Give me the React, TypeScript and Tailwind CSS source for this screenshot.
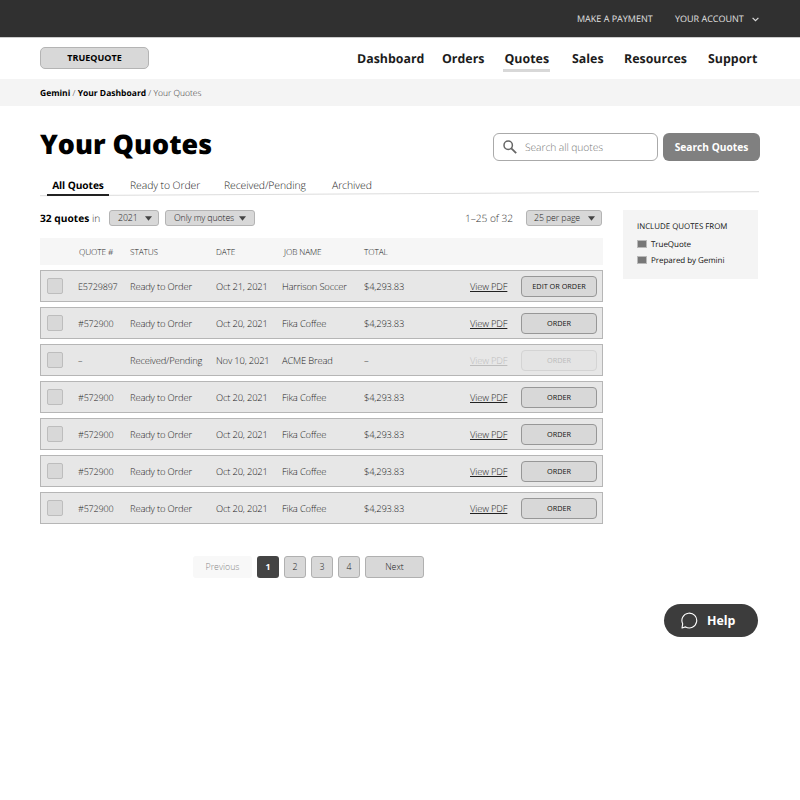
import React from "react";

type Quote = { id: string; status: string; date: string; job: string; total: string; action: string; disabled?: boolean };

const fika: Quote = { id: "#572900", status: "Ready to Order", date: "Oct 20, 2021", job: "Fika Coffee", total: "$4,293.83", action: "ORDER" };

const quotes: Quote[] = [
  { id: "E5729897", status: "Ready to Order", date: "Oct 21, 2021", job: "Harrison Soccer", total: "$4,293.83", action: "EDIT OR ORDER" },
  fika,
  { id: "–", status: "Received/Pending", date: "Nov 10, 2021", job: "ACME Bread", total: "–", action: "ORDER", disabled: true },
  fika,
  fika,
  fika,
  fika,
];

function Caret() {
  return (
    <svg className="h-[5px] w-[7px] shrink-0" viewBox="0 0 7 5">
      <path d="M0 0.3H7L3.5 4.8Z" fill="#444" />
    </svg>
  );
}

function Select({ label, className }: { label: string; className: string }) {
  return (
    <button className={`flex h-4 items-center justify-between rounded-[3px] border border-[#b4b4b4] bg-[#d8d8d8] text-[8.8px] font-light tracking-[-0.12px] text-[#222] ${className}`}>
      <span className="whitespace-nowrap pt-px">{label}</span>
      <Caret />
    </button>
  );
}

function Row({ quote }: { quote: Quote }) {
  return (
    <div className="grid h-8 grid-cols-[37px_52px_86px_66px_82px_106px_51px_76px] items-center border border-[#b6b6b6] bg-[#e7e7e7] text-[9.4px] font-light tracking-[-0.17px] text-[#222]">
      <span className="ml-[6px] size-[16px] rounded-[2px] border border-[#bdbdbd] bg-[#d8d8d8]" />
      <span className="pt-[2px] text-[9px]">{quote.id}</span>
      <span className="whitespace-nowrap pt-[3px]">{quote.status}</span>
      <span className="whitespace-nowrap pt-[2px]">{quote.date}</span>
      <span className="whitespace-nowrap pt-[2px]">{quote.job}</span>
      <span className="pt-[2px]">{quote.total}</span>
      <a className={`whitespace-nowrap pt-[2px] underline underline-offset-1 ${quote.disabled ? "text-[#bdbdbd]" : ""}`}>View PDF</a>
      <button
        className={`h-[21px] rounded-[4px] border pt-px text-[7.3px] font-normal tracking-normal ${
          quote.disabled ? "border-[#d4d4d4] bg-[#e4e4e4] text-[#bbb]" : "border-[#979797] bg-[#d8d8d8] text-[#111]"
        }`}
      >
        {quote.action}
      </button>
    </div>
  );
}

function Page({ label }: { label: string }) {
  return <button className="h-[22px] w-[22px] rounded-[3px] border border-[#b0b0b0] bg-[#d8d8d8] pt-px">{label}</button>;
}

export default function App() {
  return (
    <div className="relative h-[800px] w-[800px] overflow-hidden bg-white font-['Open_Sans',sans-serif] text-black [text-rendering:geometricPrecision]">
      <header className="flex h-[37px] items-center bg-[#303030] pl-[577px] text-[9px] text-[#e2e2e2]">
        <span className="w-[98px] whitespace-nowrap">MAKE A PAYMENT</span>
        <span className="w-[77px] whitespace-nowrap">YOUR ACCOUNT</span>
        <svg className="mt-[2px] h-[5px] w-[7px]" viewBox="0 0 7 5" fill="none" stroke="#ddd" strokeWidth="1.2">
          <path d="M0.6 0.9L3.5 3.7L6.4 0.9" />
        </svg>
      </header>

      <nav className="flex h-[42px] items-center border-t border-[#ccc] pl-10 text-[12.4px] font-bold text-[#1c1c1c]">
        <button className="-mt-px h-[22px] w-[109px] rounded-[5px] border border-[#b4b4b4] bg-[#d8d8d8] text-[9px] font-bold text-black">TRUEQUOTE</button>
        <div className="flex pl-[208px] pt-[2px]">
          <a className="w-[85px]">Dashboard</a>
          <a className="w-[61px]">Orders</a>
          <a className="-mb-[3px] mr-[22px] w-[47px] whitespace-nowrap border-b-[3px] border-[#d8d8d8] pl-[1.5px]">Quotes</a>
          <a className="w-[52px]">Sales</a>
          <a className="w-[84px]">Resources</a>
          <a>Support</a>
        </div>
      </nav>

      <div className="flex h-[27px] items-center whitespace-pre bg-[#f4f4f4] pl-10 pt-[3px] text-[8.5px] font-light text-[#333]">
        <b className="font-bold text-black">Gemini</b> / <b className="font-bold text-black">Your Dashboard</b> / Your Quotes
      </div>

      <main className="pl-10">
        <div className="flex h-[70px] pt-[27px]">
          <h1 className="-mt-[8px] w-[453px] text-[26.9px] font-extrabold leading-[37px]">Your Quotes</h1>
          <div className="mr-[5px] flex h-7 w-[165px] items-center rounded-[6px] border border-[#aaa] pl-[9px]">
            <svg className="mr-[8px] h-[14px] w-[14px]" viewBox="0 0 14 14" fill="none" stroke="#666" strokeWidth="1.5">
              <circle cx="5.2" cy="5.2" r="4.2" />
              <path d="M8.3 8.3L13.2 13.2" strokeWidth="1.8" />
            </svg>
            <span className="pt-[3px] text-[10.3px] font-light tracking-[-0.08px] text-[#777]">Search all quotes</span>
          </div>
          <button className="h-7 w-[97px] rounded-[6px] bg-[#808080] pt-px text-[10.2px] font-bold text-white">Search Quotes</button>
        </div>

        <div className="relative flex h-[21px] w-[720px] text-[10.4px] font-light leading-[21px] tracking-[-0.08px] text-[#222]">
          <svg className="absolute left-0 top-[14px] h-[8px] w-[720px]" viewBox="0 0 720 8">
            <path d="M0 5.7L719 1.7" stroke="#dcdcdc" strokeWidth="1" />
          </svg>
          <span className="relative ml-[7px] h-[20px] w-[62px] border-b-2 border-[#222] text-center text-[10.2px] font-bold leading-[18px] text-black">All Quotes</span>
          <span className="ml-[21px] w-[94px]">Ready to Order</span>
          <span className="w-[108px]">Received/Pending</span>
          <span>Archived</span>
        </div>

        <div className="flex pt-3">
          <section className="w-[563px]">
            <div className="flex h-[18px] items-center text-[10.2px] font-light text-[#333]">
              <span className="w-[69px] whitespace-nowrap pt-px">
                <b className="font-bold text-black">32 quotes</b> in
              </span>
              <Select label="2021" className="w-[50px] pl-[8px] pr-[6px]" />
              <Select label="Only my quotes" className="ml-[6px] w-[90px] pl-[8px] pr-[8px]" />
              <span className="ml-[210px] w-[61px] whitespace-nowrap pt-px tracking-[-0.05px]">1–25 of 32</span>
              <Select label="25 per page" className="w-[76px] pl-[7px] pr-[6px]" />
            </div>
            <div className="mt-[11px] grid h-[27px] grid-cols-[39px_51px_86px_68px_80px_1fr] items-center bg-[#f6f6f6] pt-[4px] text-[8.3px] font-light tracking-[-0.12px] text-[#222]">
              <span />
              <span className="whitespace-nowrap">QUOTE #</span>
              <span>STATUS</span>
              <span>DATE</span>
              <span>JOB NAME</span>
              <span>TOTAL</span>
            </div>
            <div className="mt-[5px] flex flex-col gap-[5px]">
              {quotes.map((q, i) => (
                <Row key={i} quote={q} />
              ))}
            </div>
          </section>

          <aside className="ml-5 mt-[1px] h-[69px] w-[135px] bg-[#f4f4f4] pl-[14px] pt-[9px] text-[8px] text-[#111]">
            <h2 className="h-[17px] whitespace-nowrap text-[7.9px] leading-[17px]">INCLUDE QUOTES FROM</h2>
            {["TrueQuote", "Prepared by Gemini"].map((name) => (
              <label key={name} className="flex h-4 items-center">
                <span className="mr-[4px] h-[8px] w-[10px] border border-[#b9b9b9] bg-[#777]" />
                <span className="pt-px tracking-[-0.05px]">{name}</span>
              </label>
            ))}
          </aside>
        </div>

        <div className="mt-[32px] flex pl-[153px] text-[8.8px] font-light text-[#222]">
          <button className="mr-[5px] h-[22px] w-[59px] rounded-[3px] bg-[#f8f8f8] pt-px text-[#888]">Previous</button>
          <button className="mr-[5px] h-[22px] w-[22px] rounded-[3px] bg-[#444] pt-px font-bold text-white">1</button>
          <div className="flex gap-[5px]">
            <Page label="2" />
            <Page label="3" />
            <Page label="4" />
            <button className="h-[22px] w-[59px] rounded-[3px] border border-[#b0b0b0] bg-[#d8d8d8] pt-px">Next</button>
          </div>
        </div>
      </main>

      <button className="absolute left-[664px] top-[604px] flex h-[33px] w-[94px] items-center rounded-full bg-[#3c3c3c] pl-[17px] text-[12.4px] font-bold text-white">
        <svg className="mr-[9px] h-[17px] w-[17px]" viewBox="0 0 17 17" fill="none" stroke="#fff" strokeWidth="1.1">
          <path d="M1 16L1.7 11.8A7.4 7.4 0 1 1 4.6 14.9Z" strokeLinejoin="round" />
        </svg>
        <span className="pt-[2px]">Help</span>
      </button>
    </div>
  );
}
